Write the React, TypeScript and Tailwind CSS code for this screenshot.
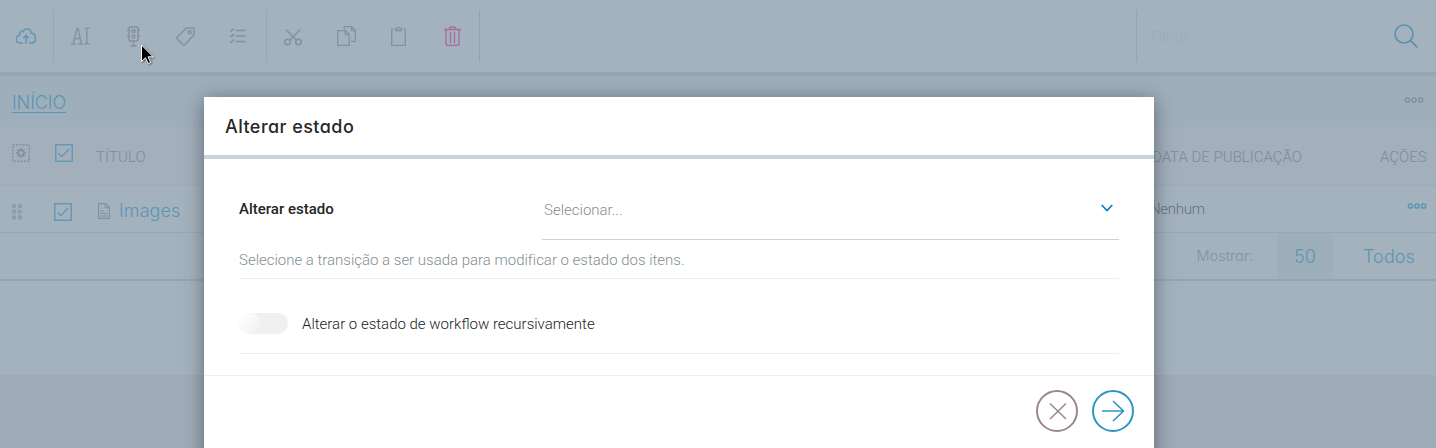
import React from 'react';

type IconProps = { className: string; children: React.ReactNode; box: string; sw?: number };

function Icon({ className, children, box, sw = 1.5 }: IconProps) {
  return (
    <svg viewBox={box} className={`shrink-0 ${className}`} fill="none" stroke="currentColor" strokeWidth={sw}>
      {children}
    </svg>
  );
}

function Checkbox() {
  return (
    <Icon className="h-[18px] w-[18px] text-[#6698b5]" box="0 0 18 18">
      <rect x=".75" y=".75" width="16.5" height="16.5" strokeWidth="1.5" />
      <path d="M3.5 9.5l3.3 3 7.4-7.5" />
    </Icon>
  );
}

function Dots({ className }: { className: string }) {
  return (
    <Icon className={`h-[6px] w-[20px] ${className}`} box="0 0 20 6" sw={1.5}>
      <circle cx="3.5" cy="3" r="2.1" />
      <circle cx="10" cy="3" r="2.1" />
      <circle cx="16.6" cy="3" r="2.1" />
    </Icon>
  );
}

function Toolbar() {
  return (
    <header className="flex h-[76px] items-center border-b-4 border-[#93a6b5] text-[#8491a0]">
      <div className="flex h-[52px] w-[54px] items-center border-r border-[#93a6b3] pl-4">
        <Icon className="h-4 w-5 text-[#5f97b5]" box="0 0 20 16">
          <path d="M7 15H4.5A3.9 3.9 0 013.7 7.2C2.7 4.2 5.3 3 6.8 3.5 8.7-.2 14.7.1 15.2 5.2 20.8 5.3 20.6 14.4 16 15h-3M10 15.8V7.5M7.2 10.2L10 7.4l2.8 2.8" />
        </Icon>
      </div>
      <div className="flex h-[52px] w-[213px] items-center border-r border-[#8fa7b7] pl-[17px]">
        <Icon className="h-[18px] w-[19px]" box="0 0 19 18" sw={1.3}>
          <path d="M0 17h5M7 17h5M2 17L6 1.5h1L10.5 17M3.3 11.5h6M13.5.8q2.3 0 2.3 1.5v13q0 1.8-2.3 1.8M18.5.8q-2.7 0-2.7 1.5M15.8 15.3q0 1.8 2.7 1.8" />
        </Icon>
        <Icon className="ml-[37px] h-[21px] w-[13px]" box="0.5 0 13 21">
          <rect x="2.5" y="1" width="9" height="14" rx="1.5" />
          <circle cx="7" cy="5" r="1.5" />
          <circle cx="7" cy="10.5" r="1.5" />
          <path d="M.5 4h2M11.5 4h2M.5 10h2M11.5 10h2M7 15v5M4 20h6" />
        </Icon>
        <Icon className="ml-[36px] h-[19px] w-[19px]" box="0 0 19 19">
          <path d="M10.5 1H17q1 0 1 1v6L9 17.5q-1 1-2 0L1.2 12q-1-1 0-2z" />
          <circle cx="13.7" cy="5.3" r="1.5" />
        </Icon>
        <Icon className="ml-[35px] h-4 w-4" box="0 0 16 16">
          <path d="M5.5 2.5H16M5.5 8H16M5.5 13.5H16M0 2l1.3 1.3L4 .5M0 7.5l1.3 1.3L4 6M0 13l1.3 1.3L4 11.5" />
        </Icon>
      </div>
      <div className="flex h-[52px] w-[213px] items-center border-r border-[#93a2af] pl-[17px]">
        <Icon className="mt-px h-[18px] w-[18px]" box="0 0 18 18">
          <path d="M2 1.5l10.8 11M16.3 1.5l-10.8 11" />
          <circle cx="3.5" cy="14" r="2.8" />
          <circle cx="14.5" cy="14" r="2.8" />
        </Icon>
        <Icon className="ml-[35px] h-5 w-[19px]" box="0 0 19 20" sw={1.3}>
          <path d="M.7 4.7h8l3.5 3.5v11.1H.7zM8.3 4.7v4h4M7.3 3V.7h7.5l3.5 3.5v11.1H14M14.5.7v4h4" />
        </Icon>
        <Icon className="ml-[35px] h-5 w-[15px]" box="0 0 15 20" sw={1.3}>
          <path d="M3 3.2H.7v16.1h13.6V3.2H12M4.7 4.5V2.4h1.2Q7.5-.2 9.2 2.4h1.2v2.1z" />
        </Icon>
        <Icon className="ml-[38px] h-5 w-[17px] text-[#a66d9d]" box="0 0 17 20" sw={1.3}>
          <path d="M0 3.5h17M2 3.5v13.8q0 2 1.7 2h9.6q1.7 0 1.7-2V3.5M5.5 3q0-2 1.6-2h2.8q1.6 0 1.6 2M6.5 6v11M10.5 6v11" />
        </Icon>
      </div>
      <div className="ml-auto flex h-[52px] w-[300px] items-center border-l border-[#8fa7b7] pl-[14px]">
        <span className="font-['Inter'] text-[14px] font-light text-[#99adba] [font-feature-settings:'cv11']">Filtrar...</span>
        <Icon className="ml-auto mr-[18px] h-6 w-6 text-[#5892b0]" box="0 0 24 24" sw={1.7}>
          <circle cx="10" cy="10" r="9" />
          <path d="M16.3 16.3l7 7" />
        </Icon>
      </div>
    </header>
  );
}

function Contents() {
  return (
    <main>
      <nav className="flex h-[51px] items-start bg-[#9faebb] pl-3">
        <a className="mt-4 h-[20.5px] border-b border-[#5c95b4] font-['Inter'] text-[18px] leading-[22px] font-light tracking-[-0.1px] text-[#5c95b4]">INÍCIO</a>
        <Dots className="ml-auto mt-[21px] mr-[12px] text-[#8390a0]" />
      </nav>
      <section className="flex h-[59px] items-start border-b border-[#9aaab7] bg-[#a3afbb] pl-3 font-['Roboto'] text-[15px] leading-[18px] font-light text-[#7c8b99]">
        <Icon className="mt-[17px] h-[18px] w-[18px] text-[#8390a0]" box="0 0 18 18">
          <rect x=".8" y=".8" width="16.4" height="16.4" strokeDasharray="2 1.28" />
          <circle cx="9" cy="9" r="2.8" strokeWidth="1.8" />
          <path d="M9 4v2M9 12v2M4 9h2M12 9h2M5.5 5.5l1.4 1.4M11.1 11.1l1.4 1.4M12.5 5.5l-1.4 1.4M6.9 11.1l-1.4 1.4" />
        </Icon>
        <div className="mt-[17px] ml-[25px]"><Checkbox /></div>
        <span className="mt-[21px] ml-[23px] tracking-[.1px]">TÍTULO</span>
        <span className="mt-[21px] ml-auto w-[228px]">DATA DE PUBLICAÇÃO</span>
        <span className="mt-[21px] w-[56px]">AÇÕES</span>
      </section>
      <section className="flex h-[47px] items-start border-b border-[#96a8b4] pl-3">
        <Icon className="mt-[18px] h-4 w-[10px] text-[#8390a0]" box="0 0 10 16" sw={1.1}>
          {[2, 7.7, 13.4].map((y) => (
            <g key={y}>
              <circle cx="2" cy={y} r="1.5" />
              <circle cx="7.8" cy={y} r="1.5" />
            </g>
          ))}
        </Icon>
        <div className="mt-[17px] ml-8"><Checkbox /></div>
        <Icon className="mt-[17px] ml-[26px] h-4 w-3 text-[#8491a0]" box="0 0 12 16">
          <path d="M.6.6h7.2l3.6 3.7v11.1H.6zM7.3.6v4h4M2.5 8H6M2.5 10.5h7M2.5 13h7" strokeWidth="1.2" />
        </Icon>
        <a className="mt-[14px] ml-[9px] font-['Inter'] text-[18px] leading-[22px] font-light tracking-[.1px] text-[#5c95b4]">Images</a>
        <span className="mt-[14px] ml-auto w-[257px] font-['Roboto'] text-[15px] leading-[18px] font-light tracking-[-.3px] text-[#65717b]">Nenhum</span>
        <Dots className="mt-[17px] mr-[9px] text-[#5c95b4]" />
      </section>
      <section className="flex h-12 items-start justify-end border-b-2 border-[#94a5b2]">
        <span className="mt-[13px] mr-6 font-['Inter'] text-[14.5px] leading-5 font-light text-[#8293a1] [font-feature-settings:'cv11']">Mostrar:</span>
        <span className="h-[46px] w-14 rounded-[3px] bg-[#9faebb] text-center font-['Inter'] text-[18px] leading-[47px] font-light text-[#5c95b2]">50</span>
        <span className="mr-[21px] ml-[30px] font-['Inter'] text-[18px] leading-[47px] font-light tracking-[.1px] text-[#5c95b2]">Todos</span>
      </section>
      <div className="h-[94px]" />
    </main>
  );
}

function Dialog() {
  return (
    <div className="absolute top-[97px] left-[204px] flex h-[400px] w-[950px] flex-col bg-white font-['Roboto'] shadow-[0_3px_18px_rgba(50,60,68,0.6)]">
      <div className="flex h-[62px] shrink-0 items-center border-b-4 border-[#c7d5d8] pt-[2px] pl-[21px]">
        <h2 className="font-['Inter'] text-[18px] leading-6 font-medium tracking-[.45px] text-[#262829] [font-feature-settings:'cv11']">Alterar estado</h2>
      </div>
      <div className="flex h-[217px] shrink-0 flex-col border-b border-[#ecefef] px-[35px]">
        <div className="mt-5 flex h-[61px]">
          <label className="w-[303px] pt-5 text-[15px] leading-[20px] font-medium text-[#252525]">Alterar estado</label>
          <div className="flex h-[61px] flex-1 border-b border-[#c7d5d8] pl-0.5">
            <span className="pt-[21px] text-[15px] leading-[20px] font-light text-[#858e91]">Selecionar...</span>
            <Icon className="mt-[25px] mr-[6px] ml-auto h-2 w-3 text-[#007bc1]" box="0 0 12 8" sw={1.6}>
              <path d="M.7 1L6 6.5l5.3-5.5" />
            </Icon>
          </div>
        </div>
        <p className="h-[39px] border-b border-[#ebefef] pt-[10px] text-[15px] leading-[20px] font-light tracking-[-.01px] text-[#838e92]">Selecione a transição a ser usada para modificar o estado dos itens.</p>
        <div className="flex h-[75px] items-start border-b border-[#ebefef]">
          <span className="mt-[34px] h-[21px] w-[49px] rounded-full bg-[#f0f0f0]">
            <span className="block h-[21px] w-[21px] rounded-full bg-gradient-to-br from-white to-[#f1f1f1]" />
          </span>
          <span className="mt-[35px] ml-[14px] text-[15px] leading-[20px] font-light text-[#202324]">Alterar o estado de workflow recursivamente</span>
        </div>
      </div>
      <div className="flex justify-end gap-[14px] pt-[14px] pr-5">
        <Icon className="h-[42px] w-[42px] text-[#9b8789]" box="0 0 42 42">
          <circle cx="21" cy="21" r="20" strokeWidth="2" />
          <path d="M14 13.5L30 29M30 13.5L14 29" strokeWidth="1.5" />
        </Icon>
        <Icon className="h-[42px] w-[42px] text-[#2c96c3]" box="0 0 42 42">
          <circle cx="21" cy="21" r="20" strokeWidth="2" />
          <path d="M10 21h21.5M21 11l10.5 10L21 31" strokeWidth="1.6" />
        </Icon>
      </div>
    </div>
  );
}

export default function App() {
  return (
    <div className="relative h-[448px] w-[1436px] overflow-hidden bg-[#9fabb7]">
      <div className="bg-[#a4b2be]">
        <Toolbar />
        <Contents />
      </div>
      <Dialog />
      <svg viewBox="0 0 14 21" className="absolute top-[44px] left-[140px] h-[21px] w-[14px] drop-shadow-[1px_1px_1px_rgba(0,0,0,.45)]">
        <path d="M1.5 1v16.5l4-3.7 2.7 5.8 2.5-1.2L8 12.8h5.2z" fill="#000" stroke="#fff" strokeWidth="1" />
      </svg>
    </div>
  );
}
